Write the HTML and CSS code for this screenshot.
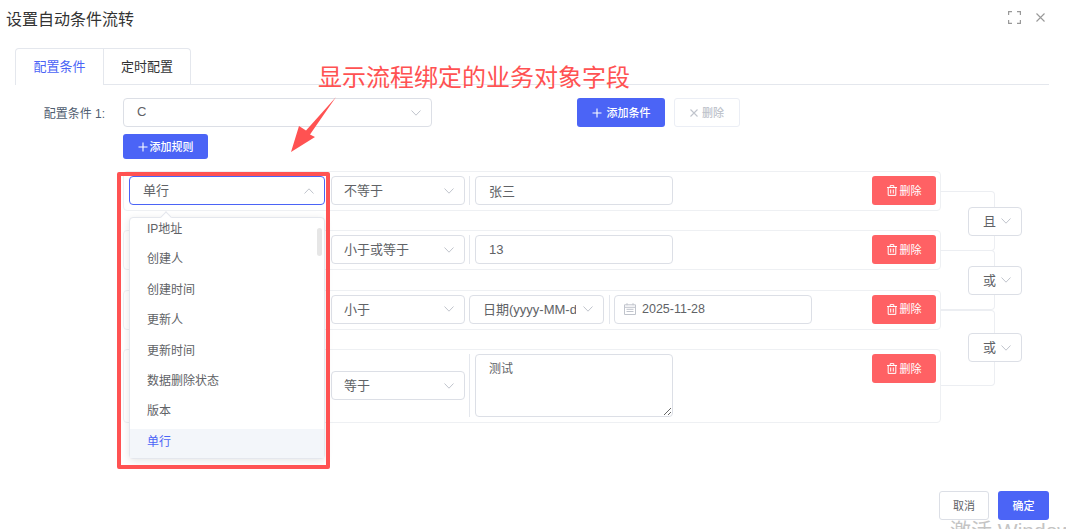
FILE: index.html
```html
<!DOCTYPE html>
<html lang="zh-CN">
<head>
    <meta charset="UTF-8">
    <meta name="viewport" content="width=device-width, initial-scale=1.0">
    <title>设置自动条件流转</title>
    <link rel="stylesheet" href="styles.css">
</head>
<body>
    <div class="dialog">
        <div class="dialog-head">
            <span class="dialog-title">设置自动条件流转</span>
            <div class="dialog-tools">
                <svg width="13" height="13" viewBox="0 0 13 13" fill="none" stroke="#999" stroke-width="1.2"><path d="M.6 4V.6H4M9 .6h3.4V4M12.4 9v3.4H9M4 12.4H.6V9"/></svg>
                <svg width="9" height="9" viewBox="0 0 9 9" fill="none" stroke="#999" stroke-width="1.1"><path d="M.5.5l8 8M8.5.5l-8 8"/></svg>
            </div>
        </div>

        <div class="dialog-body">
            <div class="tabs">
                <div class="tab-list">
                    <div class="tab active">配置条件</div>
                    <div class="tab">定时配置</div>
                </div>
            </div>

            <div class="form-row">
                <label class="form-label">配置条件 1:</label>
                <div class="select select-cond">
                    <span class="select-text">C</span>
                    <svg class="chevron" width="10" height="6" viewBox="0 0 10 6"><path d="M.5.5L5 5.2 9.5.5"/></svg>
                </div>
                <button class="btn btn-primary btn-add-cond">
                    <svg width="10" height="10" viewBox="0 0 10 10" fill="none" stroke="#fff" stroke-width="1.1"><path d="M5 .5v9M.5 5h9"/></svg>
                    <span>添加条件</span>
                </button>
                <button class="btn btn-disabled">
                    <svg width="8" height="8" viewBox="0 0 8 8" fill="none" stroke="#c0c4cc" stroke-width="1.1"><path d="M.5.5l7 7M7.5.5l-7 7"/></svg>
                    <span>删除</span>
                </button>
            </div>

            <button class="btn btn-primary btn-add-rule">
                <svg width="10" height="10" viewBox="0 0 10 10" fill="none" stroke="#fff" stroke-width="1.1"><path d="M5 .5v9M.5 5h9"/></svg>
                <span>添加规则</span>
            </button>

            <div class="rules">
                <div class="rule">
                    <div class="select select-field is-open">
                        <span class="select-text">单行</span>
                        <svg class="chevron" width="10" height="6" viewBox="0 0 10 6"><path d="M.5 5.500L5 .8l4.500 4.700"/></svg>
                        <div class="menu">
                            <span class="menu-arrow"></span>
                            <span class="menu-thumb"></span>
                            <ul class="menu-list">
                                <li>IP地址</li>
                                <li>创建人</li>
                                <li>创建时间</li>
                                <li>更新人</li>
                                <li>更新时间</li>
                                <li>数据删除状态</li>
                                <li>版本</li>
                                <li class="selected">单行</li>
                            </ul>
                        </div>
                    </div>
                    <div class="select select-op">
                        <span class="select-text">不等于</span>
                        <svg class="chevron" width="10" height="6" viewBox="0 0 10 6"><path d="M.5.5L5 5.2 9.5.5"/></svg>
                    </div>
                    <span class="sep"></span>
                    <input class="field" value="张三">
                    <button class="btn btn-danger">
                        <svg width="10" height="11" viewBox="0 0 10 11" fill="none" stroke="#fff" stroke-width="1"><path d="M0 2.500h10M3.200 2.500V.6h3.600v1.900M1.200 2.500v7.900h7.600V2.500M3.700 4.500v4M6.300 4.500v4"/></svg>
                        <span>删除</span>
                    </button>
                    <div class="link">
                        <div class="select select-logic">
                            <span class="select-text">且</span>
                            <svg class="chevron" width="10" height="6" viewBox="0 0 10 6"><path d="M.5.5L5 5.2 9.5.5"/></svg>
                        </div>
                    </div>
                </div>

                <div class="rule">
                    <div class="select select-field"></div>
                    <div class="select select-op">
                        <span class="select-text">小于或等于</span>
                        <svg class="chevron" width="10" height="6" viewBox="0 0 10 6"><path d="M.5.5L5 5.2 9.5.5"/></svg>
                    </div>
                    <span class="sep"></span>
                    <input class="field" value="13">
                    <button class="btn btn-danger">
                        <svg width="10" height="11" viewBox="0 0 10 11" fill="none" stroke="#fff" stroke-width="1"><path d="M0 2.500h10M3.200 2.500V.6h3.600v1.900M1.200 2.500v7.900h7.600V2.500M3.700 4.500v4M6.300 4.500v4"/></svg>
                        <span>删除</span>
                    </button>
                    <div class="link">
                        <div class="select select-logic">
                            <span class="select-text">或</span>
                            <svg class="chevron" width="10" height="6" viewBox="0 0 10 6"><path d="M.5.5L5 5.2 9.5.5"/></svg>
                        </div>
                    </div>
                </div>

                <div class="rule">
                    <div class="select select-field"></div>
                    <div class="select select-op">
                        <span class="select-text">小于</span>
                        <svg class="chevron" width="10" height="6" viewBox="0 0 10 6"><path d="M.5.5L5 5.2 9.5.5"/></svg>
                    </div>
                    <div class="select select-type">
                        <span class="select-text">日期(yyyy-MM-dd)</span>
                        <svg class="chevron" width="10" height="6" viewBox="0 0 10 6"><path d="M.5.5L5 5.2 9.5.5"/></svg>
                    </div>
                    <span class="sep sep-date"></span>
                    <div class="field field-date">
                        <svg width="12" height="12" viewBox="0 0 12 12" fill="none" stroke="#c0c4cc"><path d="M.5 1.800h11v9.700H.5zM.5 4.300h11M3 .2v2M9 .2v2M2.500 6.300h7M2.500 8.500h7"/></svg>
                        <span>2025-11-28</span>
                    </div>
                    <button class="btn btn-danger">
                        <svg width="10" height="11" viewBox="0 0 10 11" fill="none" stroke="#fff" stroke-width="1"><path d="M0 2.500h10M3.200 2.500V.6h3.600v1.900M1.200 2.500v7.900h7.600V2.500M3.700 4.500v4M6.300 4.500v4"/></svg>
                        <span>删除</span>
                    </button>
                    <div class="link link-tall">
                        <div class="select select-logic">
                            <span class="select-text">或</span>
                            <svg class="chevron" width="10" height="6" viewBox="0 0 10 6"><path d="M.5.5L5 5.2 9.5.5"/></svg>
                        </div>
                    </div>
                </div>

                <div class="rule rule-text">
                    <div class="select select-field"></div>
                    <div class="select select-op">
                        <span class="select-text">等于</span>
                        <svg class="chevron" width="10" height="6" viewBox="0 0 10 6"><path d="M.5.5L5 5.2 9.5.5"/></svg>
                    </div>
                    <span class="sep"></span>
                    <textarea class="field field-area">测试</textarea>
                    <button class="btn btn-danger">
                        <svg width="10" height="11" viewBox="0 0 10 11" fill="none" stroke="#fff" stroke-width="1"><path d="M0 2.500h10M3.200 2.500V.6h3.600v1.900M1.200 2.500v7.900h7.600V2.500M3.700 4.500v4M6.300 4.500v4"/></svg>
                        <span>删除</span>
                    </button>
                </div>
            </div>

            <div class="dialog-foot">
                <button class="btn btn-plain"><span>取消</span></button>
                <button class="btn btn-primary btn-ok"><span>确定</span></button>
            </div>
        </div>

        <!-- annotation drawn over the screenshot -->
        <div class="note-text">显示流程绑定的业务对象字段</div>
        <svg class="note-arrow" width="50" height="60" viewBox="0 0 50 60"><path d="M46 1L20 38.500 25 41 1 56 9 30 16 34.500z" fill="#ff5252"/></svg>
        <div class="note-box"></div>

        <div class="watermark">激活 Windows</div>
    </div>
</body>
</html>
```

FILE: styles.css
```css
* {
    box-sizing: border-box;
}
body {
    margin: 0;
    background: #fff;
    font-family: "Liberation Sans", "Noto Sans CJK SC", sans-serif;
    color: #606266;
}
.dialog {
    position: relative;
    height: 529px;
    overflow: hidden;
}
.dialog-head {
    display: flex;
    justify-content: space-between;
    align-items: center;
    height: 35px;
    margin-bottom: 13px;
    padding: 0 21px 0 6px;
}
.dialog-title {
    font-size: 16px;
    color: #333;
}
.dialog-tools {
    display: flex;
    align-items: center;
    gap: 15px;
}
.dialog-body {
    padding: 0 17px 0 15px;
}

.tabs {
    height: 37px;
    border-bottom: 1px solid #e4e7ed;
}
.tab-list {
    display: inline-flex;
    height: 37px;
    background: #fff;
    border: 1px solid #e4e7ed;
    border-bottom: none;
    border-radius: 4px 4px 0 0;
}
.tab {
    width: 87px;
    font-size: 13px;
    line-height: 36px;
    text-align: center;
    color: #303133;
}
.tab + .tab {
    border-left: 1px solid #e4e7ed;
    border-bottom: 1px solid #e4e7ed;
}
.tab.active {
    color: #4b64f6;
}

.form-row {
    display: flex;
    align-items: center;
    margin-top: 13px;
}
.form-label {
    width: 90px;
    margin-right: 18px;
    font-size: 12px;
    text-align: right;
    color: #4f5d70;
}

.select {
    position: relative;
    display: flex;
    justify-content: space-between;
    align-items: center;
    height: 29px;
    padding: 0 10px 0 13px;
    background: #fff;
    border: 1px solid #dcdfe6;
    border-radius: 4px;
    font-size: 13px;
}
.select-text {
    overflow: hidden;
    white-space: nowrap;
    padding-bottom: 2px;
}
.chevron {
    flex: none;
    margin-left: 7px;
    fill: none;
    stroke: #c0c4cc;
    stroke-width: 1;
}
.select-cond {
    width: 309px;
}
.select-field {
    width: 196px;
    margin-right: 6px;
}
.select-field.is-open {
    border-color: #4b64f6;
}
.select-op {
    width: 134px;
    margin-right: 4px;
    padding-left: 12px;
}
.select-type {
    width: 135px;
}
.select-logic {
    flex: none;
    width: 54px;
    margin-right: -28px;
    padding: 0 10px 0 14px;
}
.select-logic .chevron {
    margin-left: 4px;
}

.btn {
    display: inline-flex;
    justify-content: center;
    align-items: center;
    gap: 4px;
    height: 29px;
    padding: 0;
    border: 1px solid transparent;
    border-radius: 3px;
    font-family: inherit;
    font-size: 11px;
}
.btn span {
    margin-bottom: 2px;
}
.btn-primary {
    background: #4b64f6;
    color: #fff;
    font-weight: 500;
}
.btn-add-cond {
    width: 88px;
    margin-left: 145px;
    gap: 5px;
}
.btn-disabled {
    width: 66px;
    margin-left: 9px;
    background: #fff;
    border-color: #ebeef5;
    color: #c0c4cc;
    font-weight: 500;
}
.btn-add-rule {
    display: flex;
    gap: 2px;
    width: 85px;
    height: 25px;
    margin: 7px 0 0 108px;
}
.btn-danger {
    width: 64px;
    margin-left: auto;
    gap: 3px;
    background: #ff6164;
    color: #fff;
}
.btn-plain {
    width: 50px;
    background: #fff;
    border-color: #dcdfe6;
    color: #606266;
}
.btn-ok {
    width: 51px;
}

.rules {
    display: flex;
    flex-direction: column;
    gap: 19.4px;
    width: 818px;
    margin: 12px 0 0 108px;
}
.rule {
    position: relative;
    display: flex;
    align-items: flex-start;
    height: 40px;
    padding: 4px 4px 0 5px;
    border: 1px solid #eef0f3;
    border-radius: 4px;
}
.rule-text {
    height: 74px;
}
.rule-text .select-op {
    margin-top: 17px;
}
.sep {
    align-self: stretch;
    width: 1px;
    height: 29px;
    margin: 0 5px 0 0;
    background: #e4e7ed;
}
.rule-text .sep {
    height: 63px;
}
.sep-date {
    margin: 0 4px 0 5px;
}
.field {
    width: 198px;
    height: 29px;
    padding: 0 13px;
    background: #fff;
    border: 1px solid #dcdfe6;
    border-radius: 4px;
    font-family: inherit;
    font-size: 13px;
    color: #606266;
    outline: none;
}
.field-date {
    display: flex;
    align-items: center;
    gap: 6px;
    padding-left: 9px;
    font-size: 12.500px;
}
.field-area {
    display: block;
    height: 63px;
    padding: 6px 13px;
    font-size: 12px;
    line-height: 16px;
}

.link {
    position: absolute;
    left: 100%;
    top: 19px;
    display: flex;
    justify-content: flex-end;
    align-items: center;
    width: 55px;
    height: 60px;
    border: 1px solid #eceef2;
    border-left: none;
    border-radius: 0 4px 4px 0;
}
.link-tall {
    height: 76px;
}

.menu {
    position: absolute;
    left: -1px;
    top: 40px;
    z-index: 5;
    width: 196px;
    height: 242px;
    background: #fff;
    border: 1px solid #e4e7ed;
    border-radius: 4px;
    box-shadow: 0 2px 8px rgba(0, 0, 0, 0.1);
}
.menu-arrow {
    position: absolute;
    left: 32px;
    top: -5px;
    width: 8px;
    height: 8px;
    background: #fff;
    border-top: 1px solid #e4e7ed;
    border-left: 1px solid #e4e7ed;
    transform: rotate(45deg);
}
.menu-thumb {
    position: absolute;
    right: 2px;
    top: 10px;
    width: 5px;
    height: 28px;
    background: #e6e6e6;
    border-radius: 3px;
}
.menu-list {
    height: 240px;
    margin: 0;
    padding: 0;
    overflow: hidden;
    list-style: none;
    font-size: 12px;
}
.menu-list li {
    height: 30.400px;
    padding-left: 17px;
    line-height: 27px;
}
.menu-list li:first-child {
    margin-top: -2px;
}
.menu-list .selected {
    background: #f3f6fa;
    color: #4b64f6;
}

.dialog-foot {
    display: flex;
    justify-content: flex-end;
    gap: 9px;
    margin-top: 68px;
}

.note-text {
    position: absolute;
    left: 318px;
    top: 60px;
    font-size: 24px;
    line-height: 36px;
    color: #ff5252;
}
.note-arrow {
    position: absolute;
    left: 290px;
    top: 96px;
}
.note-box {
    position: absolute;
    left: 117px;
    top: 172px;
    z-index: 6;
    width: 213px;
    height: 297px;
    border: 4px solid #ff5252;
    border-radius: 2px;
}
.watermark {
    position: absolute;
    left: 950px;
    top: 517px;
    font-size: 21px;
    line-height: 28px;
    white-space: nowrap;
    color: #c4c4c4;
}
```
